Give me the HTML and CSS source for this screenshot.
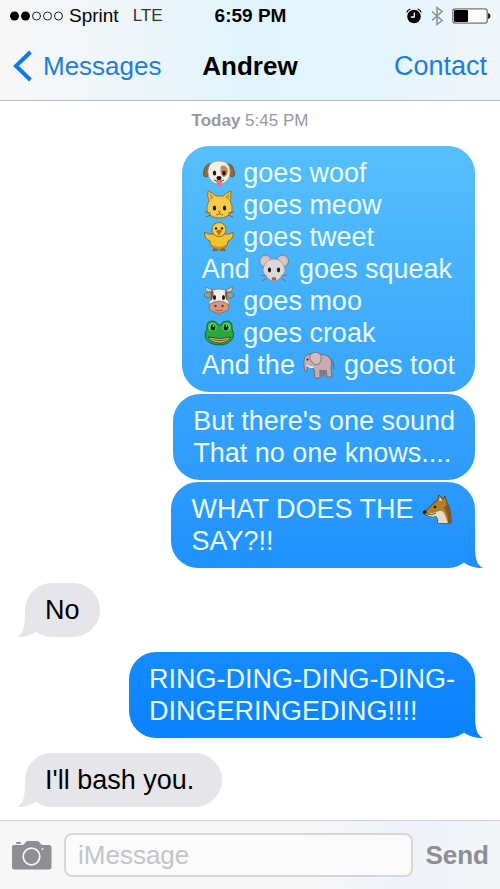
FILE: index.html
```html
<!DOCTYPE html>
<html lang="en">
<head>
    <meta charset="utf-8">
    <meta name="viewport" content="width=device-width, initial-scale=1">
    <title>Messages - Andrew</title>
    <link rel="stylesheet" href="styles.css">
</head>

<body>
    <div class="phone">
        <header class="header">
            <!-- status bar -->
            <div class="status">
                <div class="carrier">
                    <svg class="signal" width="53" height="10" viewBox="0 0 53 10" aria-hidden="true">
                        <circle cx="4.5" cy="5" r="4.5" fill="#000" />
                        <circle cx="15.5" cy="5" r="4.5" fill="#000" />
                        <g fill="none" stroke="#222" stroke-width="1">
                            <circle cx="26.5" cy="5" r="4" />
                            <circle cx="37.5" cy="5" r="4" />
                            <circle cx="48.5" cy="5" r="4" />
                        </g>
                    </svg>
                    <span>Sprint</span>
                    <span class="network">LTE</span>
                </div>
                <div class="clock">6:59 PM</div>
                <div class="indicators">
                    <svg width="16" height="16" viewBox="0 0 16 16" aria-hidden="true">
                        <circle cx="8" cy="8.5" r="6.8" fill="#000" />
                        <path d="M.8 4.4 Q1.6 1.8 4.4 1M15.2 4.4 Q14.4 1.8 11.6 1" fill="none" stroke="#000" stroke-width="1.3" />
                        <path d="M8.3 4.5V9H4.8" fill="none" stroke="#fff" stroke-width="1.3" />
                    </svg>
                    <svg width="12" height="20" viewBox="0 0 12 20" aria-hidden="true">
                        <path d="M1 5.5 L11 14.5 L6 18.500 V1.500 L11 5.5 L1 14.5" fill="none" stroke="#8d979d" stroke-width="1.600" />
                    </svg>
                    <svg width="39" height="16" viewBox="0 0 39 16" aria-hidden="true">
                        <rect x=".8" y=".8" width="34.4" height="14.4" rx="2.5" fill="#fafcfd" stroke="#777" stroke-width="1.3" />
                        <rect x="2" y="2" width="14" height="12" rx="1" fill="#000" />
                        <path d="M36 5 Q38.5 5.500 38.500 8 T36 11Z" fill="#222" />
                    </svg>
                </div>
            </div>
            <nav class="nav">
                <a class="back" href="#">
                    <svg width="20" height="32" viewBox="0 0 20 32" aria-hidden="true">
                        <path d="M17.500 2 L3 16 L17.500 30" fill="none" stroke="#1579e4" stroke-width="4" />
                    </svg>
                    Messages
                </a>
                <h1 class="name">Andrew</h1>
                <a class="contact" href="#">Contact</a>
            </nav>
        </header>

        <main class="chat">
            <p class="date"><b>Today</b> 5:45 PM</p>

            <div class="group">
                <div class="bubble sent sent-1">
                    <svg class="emoji" viewBox="0 0 34 30" role="img" aria-label="dog">
                        <path d="M9 6 Q4 5 2 12 Q0 19 4 19 Q8 18 9 11Z M25 6 Q30 5 32 12 Q34 19 30 19 Q26 18 25 11Z" fill="#94663c" stroke="#654326" stroke-width=".7" />
                        <path d="M17 3 C26 3 28 9 28 14 C28 20 24 26 17 26 C10 26 6 20 6 14 C6 8 9 3 17 3Z" fill="#f4eee8" stroke="#a99a8c" stroke-width=".7" />
                        <path d="M19 8 Q24 6 26 12 Q26 19 21 19 Q17 15 19 8Z" fill="#c08b55" />
                        <ellipse cx="12.500" cy="15" rx="1.700" ry="2.600" fill="#24150d" />
                        <ellipse cx="22" cy="15" rx="1.700" ry="2.600" fill="#24150d" />
                        <path d="M14.500 23 H20 Q20 29 17.200 29 Q14.500 29 14.500 23Z" fill="#ee7390" />
                        <path d="M12 22 Q15 24.500 17 21.500 Q19 24.500 22 22" fill="none" stroke="#5b4236" stroke-width="1" />
                        <ellipse cx="17" cy="20" rx="2.600" ry="1.900" fill="#201715" />
                    </svg> goes woof<br>
                    <svg class="emoji" viewBox="0 0 34 30" role="img" aria-label="cat">
                        <path d="M6 1 Q11 3 14 6 H21 Q25 2 29 1 Q29 7 28 11 Q31 16 30 21 Q26 28 17.500 28 Q8 28 5 21 Q4 16 7 11 Q5 6 6 1Z" fill="#f6ca4b" stroke="#9d711f" stroke-width="1" />
                        <path d="M7.500 3 L12 7 L8.500 10Z M27.500 3 L23 7 L26.500 10Z" fill="#d8933f" />
                        <ellipse cx="12.500" cy="18" rx="1.700" ry="2.600" fill="#2b1b08" />
                        <ellipse cx="22.500" cy="18" rx="1.700" ry="2.600" fill="#2b1b08" />
                        <path d="M16 21 H19 L17.500 23Z" fill="#b65a36" />
                        <path d="M14 24.500 Q16.500 26 17.500 23 Q18.500 26 21 24.500M9 23 L3 22M9 25 L4 27M26 23 L32 22M26 25 L31 27" fill="none" stroke="#7b5520" stroke-width=".8" />
                    </svg> goes meow<br>
                    <svg class="emoji" viewBox="0 0 34 30" role="img" aria-label="chick">
                        <path d="M13 26 L11 29 M12 28 H16 M21 26 L23 29 M18 28 H22" stroke="#955b18" stroke-width="1.600" fill="none" />
                        <path d="M11 12 Q6 13 2.500 10 Q2 17 8 19 Q8 27 17 27 Q26 27 26 19 Q32 17 31 10 Q28 13 23 12Z" fill="#efc532" stroke="#8a6417" stroke-width=".9" />
                        <circle cx="17" cy="7.500" r="7" fill="#f6cf43" stroke="#8a6417" stroke-width=".9" />
                        <path d="M9 22 Q17 28 25 22 Q23 27 17 27 Q11 27 9 22Z" fill="#c69023" />
                        <circle cx="14" cy="6.500" r="1.200" fill="#2b1b08" />
                        <circle cx="20" cy="6.500" r="1.200" fill="#2b1b08" />
                        <path d="M14.500 9 Q17 7 19.500 9 L17 13Z" fill="#dc6429" stroke="#99401b" stroke-width=".5" />
                    </svg> goes tweet<br>
                    And <svg class="emoji" viewBox="0 0 34 30" role="img" aria-label="mouse">
                        <circle cx="8.500" cy="7" r="6" fill="#c8bfc4" stroke="#77717c" stroke-width=".8" />
                        <circle cx="25.500" cy="7" r="6" fill="#c8bfc4" stroke="#77717c" stroke-width=".8" />
                        <circle cx="8.500" cy="7.500" r="3.800" fill="#e0c3c6" />
                        <circle cx="25.500" cy="7.500" r="3.800" fill="#e0c3c6" />
                        <path d="M17 5 C24 5 28 11 28 17 Q26 24 17 28 Q8 24 6 17 C6 11 10 5 17 5Z" fill="#dcd7d9" stroke="#89838b" stroke-width=".7" />
                        <ellipse cx="12.500" cy="16" rx="1.600" ry="2.400" fill="#21191a" />
                        <ellipse cx="21.500" cy="16" rx="1.600" ry="2.400" fill="#21191a" />
                        <path d="M10 22 L4 21M10 24 L5 27M24 22 L30 21M24 24 L29 27" stroke="#6d686f" stroke-width=".8" />
                        <ellipse cx="17" cy="25" rx="2.300" ry="2" fill="#b5575b" />
                    </svg> goes squeak<br>
                    <svg class="emoji" viewBox="0 0 34 30" role="img" aria-label="cow">
                        <path d="M8 6 Q3 6 3.500 1 Q7 3 11 4Z M26 6 Q31 6 30.500 1 Q27 3 23 4Z" fill="#d8d2b4" stroke="#79725a" stroke-width=".7" />
                        <path d="M9 7 Q4 5 2 9 Q5 14 9 11Z M25 7 Q30 5 32 9 Q29 14 25 11Z" fill="#a39a92" stroke="#5f5751" stroke-width=".7" />
                        <path d="M9 5 Q17 1 25 5 L27 17 Q27 26 17 28 Q7 26 7 17Z" fill="#f3efeb" stroke="#81756c" stroke-width=".7" />
                        <path d="M9 5 Q12 4 11.500 8 Q11 14 8 15Z M25 5 Q22.500 4 23 9 Q23.500 14 26 15Z" fill="#77604e" />
                        <path d="M8 18 Q17 12 26 18 Q29 24 22 26 Q17 29 12 26 Q5 24 8 18Z" fill="#d69880" stroke="#885b49" stroke-width=".7" />
                        <ellipse cx="12.500" cy="11.500" rx="1.500" ry="2.500" fill="#1c1310" />
                        <ellipse cx="21.500" cy="11.500" rx="1.500" ry="2.500" fill="#1c1310" />
                        <circle cx="13.500" cy="20" r="1.200" fill="#6b382c" />
                        <circle cx="20.500" cy="20" r="1.200" fill="#6b382c" />
                        <path d="M13 24 Q17 25.500 21 24" fill="none" stroke="#8a5141" stroke-width=".8" />
                    </svg> goes moo<br>
                    <svg class="emoji" viewBox="0 0 34 30" role="img" aria-label="frog">
                        <path d="M5 11 Q4 3 10 3 Q15 3 16 7 H19 Q20 3 25 3 Q31 3 30 11 Q33 16 31 20 Q27 27 17.500 27 Q7 27 3.500 20 Q2 15 5 11Z" fill="#27a73d" stroke="#126125" stroke-width=".9" />
                        <circle cx="10.500" cy="9" r="4.300" fill="#62d052" />
                        <circle cx="24.500" cy="9" r="4.300" fill="#62d052" />
                        <ellipse cx="11" cy="9.500" rx="2.300" ry="2.900" fill="#0b2c10" />
                        <ellipse cx="24" cy="9.500" rx="2.300" ry="2.900" fill="#0b2c10" />
                        <circle cx="11.500" cy="8" r=".8" fill="#fff" />
                        <circle cx="24.500" cy="8" r=".8" fill="#fff" />
                        <path d="M6 19 Q17.500 22 29 19 Q25 25 17.500 25 Q9 25 6 19Z" fill="#d9ac62" stroke="#145d22" stroke-width=".9" />
                        <path d="M8 20.500 Q17.500 23.500 27 20.500 Q23 23 17.500 23 Q12 23 8 20.500Z" fill="#863f2c" />
                    </svg> goes croak<br>
                    And the <svg class="emoji" viewBox="0 0 34 30" role="img" aria-label="elephant">
                        <path d="M28 9 Q32 12 32 19" fill="none" stroke="#75686f" stroke-width="1.200" />
                        <path d="M14 5 Q23 3 28 8 Q31 12 29 18 L30 27 H25 L24 20 Q21 22 18 20 L18 28 H13 L12 19 Q10 18 8 16 Q5 15 5 19 Q5 22 4 22 Q2 21 2 15 Q1 8 5 5 Q10 2 14 5Z" fill="#c4aeb1" stroke="#75636a" stroke-width=".9" />
                        <path d="M18 20 L20 27 H22 L24 20Z" fill="#89747b" />
                        <path d="M8 5 Q13 0 18 4 Q21 9 17 14 Q12 16 10 12 Q7 9 8 5Z" fill="#d3bdbf" stroke="#806e75" stroke-width=".9" />
                        <circle cx="5.500" cy="9.500" r="1" fill="#241a1d" />
                        <path d="M5 15 Q8 18 11 17" fill="none" stroke="#fff" stroke-width="1.500" />
                    </svg> goes toot
                </div>
                <div class="bubble sent sent-2">But there's one sound<br>That no one knows....</div>
                <div class="bubble sent sent-3">
                    WHAT DOES THE <svg class="emoji" viewBox="0 0 34 30" role="img" aria-label="fox">
                        <path d="M16 7 L18 1 L22 5 L24 2 L26 9 Q30 14 30 29 H17 Q18 25 15 22 Q9 24 6 21 Q2 21 2 18 Q6 16 10 12 Q12 8 16 7Z" fill="#b47d2d" stroke="#594019" stroke-width=".9" />
                        <path d="M5 20 Q12 20 18 17 Q22 16 24 21 L27 29 H17 Q18 25 15 22 Q9 24 5 20Z" fill="#e6ddc8" />
                        <path d="M26 10 Q30 15 30 29 H27 Q27 18 23 14Z" fill="#83571f" />
                        <path d="M18 7 L19 3 L21 7Z" fill="#edd4a3" />
                        <path d="M2 17 Q4 15 6 18 Q4 21 2 19Z" fill="#1d1710" />
                        <path d="M6 20 Q11 22 15 19" fill="none" stroke="#493619" stroke-width=".8" />
                        <circle cx="14" cy="13" r="1.300" fill="#1d1710" />
                    </svg><br>SAY?!!
                    <svg class="tail" viewBox="0 0 30 24" aria-hidden="true"><path d="M22 -4 C22 14 23 20 30 24 C22 24 15 22 11 18.500Z" /></svg>
                </div>
            </div>

            <div class="bubble received">
                No
                <svg class="tail" viewBox="0 0 30 24" aria-hidden="true"><path d="M22 -4 C22 14 23 20 30 24 C22 24 15 22 11 18.500Z" /></svg>
            </div>

            <div class="bubble sent sent-4">
                RING-DING-DING-DING-<br>DINGERINGEDING!!!!
                <svg class="tail" viewBox="0 0 30 24" aria-hidden="true"><path d="M22 -4 C22 14 23 20 30 24 C22 24 15 22 11 18.500Z" /></svg>
            </div>

            <div class="bubble received">
                I'll bash you.&nbsp;
                <svg class="tail" viewBox="0 0 30 24" aria-hidden="true"><path d="M22 -4 C22 14 23 20 30 24 C22 24 15 22 11 18.500Z" /></svg>
            </div>
        </main>

        <form class="composer">
            <button class="camera" type="button" aria-label="Camera">
                <svg width="40" height="30" viewBox="0 0 40 30" aria-hidden="true">
                    <path d="M2 5 H10 Q12 5 13 3 Q14 1 16 1 H25 Q27 1 28 3 Q29 5 31 5 H37 Q39.500 5 39.500 7.500 V27 Q39.500 29.500 37 29.500 H2.500 Q0 29.500 0 27 V7 Q0 5 2 5Z" fill="#8e8e93" />
                    <rect x="4" y="2" width="5" height="2" rx="1" fill="#8e8e93" />
                    <circle cx="19.500" cy="16.500" r="8.300" fill="none" stroke="#f7f7f7" stroke-width="1.700" />
                    <circle cx="30.500" cy="9" r="1" fill="#f7f7f7" />
                </svg>
            </button>
            <input class="message" type="text" placeholder="iMessage" aria-label="iMessage">
            <button class="send" type="button">Send</button>
        </form>
    </div>
</body>

</html>
```
FILE: styles.css
```css
* {
    margin: 0;
    padding: 0;
    box-sizing: border-box;
}

body {
    font-family: "Liberation Sans", Arial, sans-serif;
    background-color: #fff;
    color: #000;
}

svg {
    display: block;
    flex-shrink: 0;
}

a {
    text-decoration: none;
    color: #1b7edf;
}

button {
    border: none;
    background: none;
}

.phone {
    display: flex;
    flex-direction: column;
    min-height: 100vh;
}

/* header */
.header {
    border-bottom: 1px solid #b5bbc0;
    background: linear-gradient(90deg, #f7f7f7 0%, #f0f6f9 22%, #e1f4fd 48%, #e3f4fd 75%, #f1f6fa 100%);
}

.status,
.nav {
    display: grid;
    grid-template-columns: 1fr auto 1fr;
    align-items: center;
}

.status {
    height: 32px;
    padding: 0 9px 0 10px;
    font-size: 19px;
}

.carrier {
    display: flex;
    align-items: center;
    gap: 6px;
}

.network {
    margin-left: 8px;
    font-size: 17px;
    color: #333;
}

.clock {
    font-weight: bold;
}

.indicators {
    display: flex;
    align-items: center;
    justify-content: flex-end;
    gap: 9px;
}

.nav {
    height: 68px;
    padding: 0 13px;
    font-size: 26px;
}

.back {
    display: flex;
    align-items: center;
    gap: 10px;
}

.name {
    font-size: 26px;
}

.contact {
    text-align: right;
    font-size: 27px;
}

/* conversation */
.chat {
    display: flex;
    flex-direction: column;
    flex: 1;
    gap: 15px;
    padding: 10px 25px 13px;
}

.date {
    text-align: center;
    font-size: 17px;
    line-height: 20px;
    color: #98989d;
}

.group {
    display: flex;
    flex-direction: column;
    gap: 2px;
}

.bubble {
    position: relative;
    padding: 11px 20px;
    border-radius: 27px;
    font-size: 27px;
    line-height: 32px;
}

.sent {
    align-self: flex-end;
    color: #e9fbff;
}

.received {
    align-self: flex-start;
    background-color: #e5e5ea;
    color: #000;
}

.sent-1 {
    background: linear-gradient(#56c0fb, #38a4fd);
}

.sent-2 {
    background: linear-gradient(#38a4fd, #2d9bfd);
}

.sent-3 {
    background: linear-gradient(#2d9bfd, #1f91fe);
}

.sent-4 {
    background: linear-gradient(#158bfe, #0b82fe);
}

.emoji {
    display: inline-block;
    width: 34px;
    height: 30px;
    vertical-align: -6px;
}

.tail {
    position: absolute;
    right: -8px;
    bottom: 0;
    width: 30px;
    height: 24px;
    overflow: visible;
    fill: #1f91fe;
}

.sent-4 .tail {
    fill: #0b82fe;
}

.received .tail {
    right: auto;
    left: -8px;
    fill: #e5e5ea;
    transform: scaleX(-1);
}

/* message box */
.composer {
    display: flex;
    align-items: center;
    gap: 12px;
    padding: 12px 11px 12px 12px;
    border-top: 1px solid #cfd0d2;
    background: linear-gradient(90deg, #f7f7f7 60%, #eef3f9 82%, #f3f5f8);
}

.message {
    flex: 1;
    min-width: 0;
    height: 44px;
    padding: 0 12px;
    border: 2px solid #d6d7da;
    border-radius: 8px;
    background-color: #fbfbfb;
    font-family: inherit;
    font-size: 26px;
}

.message::placeholder {
    color: #c4c4c9;
}

.send {
    font-family: inherit;
    font-size: 26px;
    font-weight: bold;
    color: #8e8e93;
}
```
